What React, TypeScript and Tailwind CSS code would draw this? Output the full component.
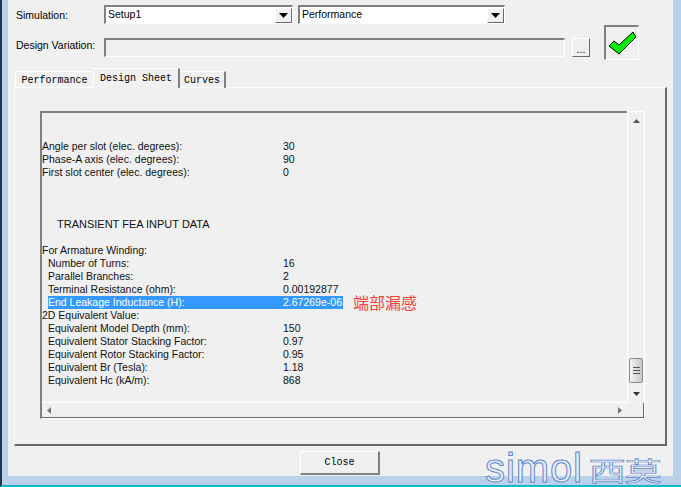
const topRows = [
  { label: "Angle per slot (elec. degrees):", value: "30" },
  { label: "Phase-A axis (elec. degrees):", value: "90" },
  { label: "First slot center (elec. degrees):", value: "0" },
]

const windingRows = [
  { label: "Number of Turns:", value: "16" },
  { label: "Parallel Branches:", value: "2" },
  { label: "Terminal Resistance (ohm):", value: "0.00192877" },
]

const equivalentRows = [
  { label: "Equivalent Model Depth (mm):", value: "150" },
  { label: "Equivalent Stator Stacking Factor:", value: "0.97" },
  { label: "Equivalent Rotor Stacking Factor:", value: "0.95" },
  { label: "Equivalent Br (Tesla):", value: "1.18" },
  { label: "Equivalent Hc (kA/m):", value: "868" },
]

function Row({ label, value, indent }: { label: string; value: string; indent?: boolean }) {
  return (
    <div className="flex h-[13px] items-center leading-[13px] whitespace-nowrap">
      <div className={indent ? "w-[241px] pl-[6px]" : "w-[241px]"}>{label}</div>
      <div>{value}</div>
    </div>
  )
}

function DownArrow() {
  return (
    <svg width="9" height="5" viewBox="0 0 9 5">
      <polygon points="0,0 9,0 4.5,5" fill="#000" />
    </svg>
  )
}

function Select({ value, className }: { value: string; className: string }) {
  return (
    <div
      className={`flex h-[19px] items-center justify-between border border-t-2 border-l-2 border-t-[#808080] border-l-[#808080] border-r-white border-b-white bg-white pl-[2px] text-[10.5px] ${className}`}
    >
      <span>{value}</span>
      <div className="flex h-[15px] w-[17px] items-center justify-center border border-t-white border-l-white border-r-[#696969] border-b-[#696969] bg-[#f0f0f0]">
        <DownArrow />
      </div>
    </div>
  )
}

export default function App() {
  return (
    <div className="relative h-[487px] w-[681px] overflow-hidden border-b-2 border-l-2 border-b-[#12b5c9] border-l-[#1d3a4a] bg-[#b9d1ea] pr-[8px] pb-[9px] pl-[6px] font-['Liberation_Sans',sans-serif] text-[10.5px] text-black">
      <div className="flex h-full flex-col bg-[#f0f0f0] pt-[5px]">
        <div className="flex items-center">
          <div className="mt-[2px] ml-[8px] w-[88px]">Simulation:</div>
          <Select value="Setup1" className="w-[189px]" />
          <Select value="Performance" className="ml-[5px] w-[207px]" />
        </div>

        <div className="mt-[14px] flex h-[19px] items-start">
          <div className="ml-[8px] w-[88px] leading-[15px]">Design Variation:</div>
          <div className="h-[19px] w-[461px] border border-t-2 border-l-2 border-t-[#808080] border-l-[#808080] border-r-white border-b-white" />
          <button className="ml-[7px] flex h-[19px] w-[18px] items-end justify-center border border-t-white border-l-white border-r-[#696969] border-b-[#696969] pb-[3px] leading-[8px]">
            ...
          </button>
          <div className="mt-[-13px] ml-[14px] flex h-[35px] w-[35px] items-center justify-center border border-t-2 border-l-2 border-t-[#808080] border-l-[#808080] border-r-white border-b-white">
            <svg width="31" height="31" viewBox="0 0 31 31">
              <polygon points="2,18 7,13 12,17 26,4 29,9 12,26" fill="#00f000" stroke="#000" strokeWidth="1" />
            </svg>
          </div>
        </div>

        <div className="relative z-10 mt-[11px] ml-[7px] -mb-px flex h-[20px] items-end font-['Liberation_Mono',monospace] text-[10px]">
          <div className="flex h-[17px] w-[78px] items-center justify-center border-t border-l border-white pt-px">Performance</div>
          <div className="flex h-[20px] w-[87px] items-start justify-center border-t border-r-2 border-l border-t-white border-r-[#808080] border-l-white bg-[#f0f0f0] pt-[2px]">Design Sheet</div>
          <div className="flex h-[17px] w-[46px] items-center justify-center border-t border-r-2 border-t-white border-r-[#808080] pt-px">Curves</div>
        </div>

        <div className="ml-[6px] h-[359px] w-[653px] border border-r-2 border-b-2 border-t-white border-r-[#696969] border-b-[#696969] border-l-white pt-[23px] pl-[25px]">
          <div className="relative h-[308px] w-[605px] border border-t-2 border-l-2 border-t-[#808080] border-r-white border-b-white border-l-[#808080] shadow-[inset_-1px_-1px_0_#696969]">
            <div className="pt-[27px] text-[#111]">
              {topRows.map((r) => (
                <Row key={r.label} {...r} />
              ))}
              <div className="h-[39px]" />
              <div className="h-[13px] pl-[15px] text-[11px] leading-[13px]">TRANSIENT FEA INPUT DATA</div>
              <div className="h-[13px]" />
              <div className="h-[13px] leading-[13px]">For Armature Winding:</div>
              {windingRows.map((r) => (
                <Row key={r.label} {...r} indent />
              ))}
              <div className="flex h-[13px] items-center leading-[13px] whitespace-nowrap">
                <div className="ml-[6px] flex h-[13px] w-[295px] items-center bg-[#3399ff] text-white">
                  <div className="w-[235px]">End Leakage Inductance (H):</div>
                  <div>2.67269e-06</div>
                </div>
                <div className="ml-[10px] font-['Noto_Sans_CJK_SC',sans-serif] text-[16px] text-[#f0433a]">端部漏感</div>
              </div>
              <div className="h-[13px] leading-[13px]">2D Equivalent Value:</div>
              {equivalentRows.map((r) => (
                <Row key={r.label} {...r} indent />
              ))}
            </div>

            {/* scrollbars */}
            <div className="absolute top-[-2px] right-[-1px] bottom-[15px] flex w-[18px] flex-col items-center justify-between border-t border-r border-l border-white bg-[#f0f0f0] py-[7px]">
              <svg width="7" height="4" viewBox="0 0 7 4">
                <polygon points="0,4 7,4 3.5,0" fill="#555" />
              </svg>
              <svg width="7" height="4" viewBox="0 0 7 4">
                <polygon points="0,0 7,0 3.5,4" fill="#333" />
              </svg>
              <div className="absolute top-[246px] left-[1px] flex h-[25px] w-[14px] flex-col items-center justify-center gap-[2px] rounded-[2px] border border-[#8a8a8a] bg-gradient-to-r from-[#f4f4f4] to-[#c8c8c8]">
                <div className="h-px w-[7px] bg-[#555]" />
                <div className="h-px w-[7px] bg-[#555]" />
                <div className="h-px w-[7px] bg-[#555]" />
              </div>
            </div>
            <div className="absolute right-[17px] bottom-[1px] left-0 flex h-[15px] items-center justify-between border-t border-white px-[5px]">
              <svg width="4" height="7" viewBox="0 0 4 7">
                <polygon points="4,0 4,7 0,3.5" fill="#777" />
              </svg>
              <svg width="4" height="7" viewBox="0 0 4 7">
                <polygon points="0,0 0,7 4,3.5" fill="#777" />
              </svg>
            </div>
          </div>
        </div>

        <button className="mt-[5px] ml-[292px] flex h-[24px] w-[80px] items-center justify-center border border-r-2 border-b-2 border-t-white border-r-[#808080] border-b-[#808080] border-l-white font-['Liberation_Mono',monospace] text-[10px]">
          Close
        </button>
      </div>

      {/* watermark logo */}
      <div className="absolute top-[451px] left-[483px] flex h-[34px] items-end leading-[34px] text-[#e6eef9] [-webkit-text-stroke:1px_#5f86cc]">
        <span className="text-[40px] tracking-[0.9px]">simol</span>
        <span className="mb-[3px] ml-[6px] inline-block origin-bottom scale-y-[0.7] font-['Noto_Sans_CJK_SC',sans-serif] text-[37px] leading-[34px] tracking-[-1px]">西莫</span>
      </div>
    </div>
  )
}
